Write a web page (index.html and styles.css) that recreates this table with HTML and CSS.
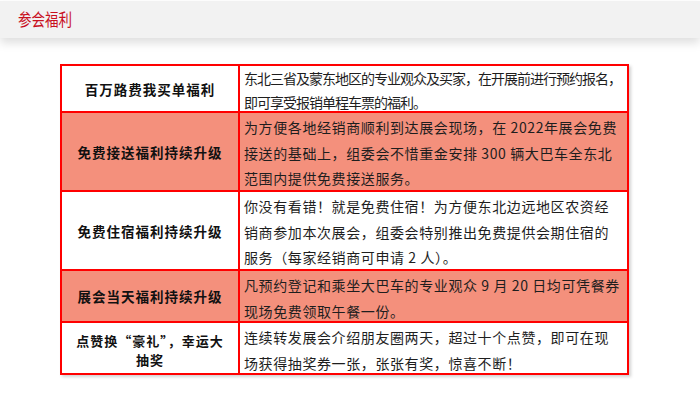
FILE: index.html
```html
<!DOCTYPE html>
<html lang="zh">
<head>
<meta charset="utf-8">
<title>参会福利</title>
<link rel="stylesheet" href="styles.css">
</head>
<body>
<header class="topbar">
  <h1 class="title"><span class="title-text">参会福利</span></h1>
</header>
<main class="content">
  <div class="benefits">
    <div class="name">百万路费我买单福利</div>
    <div class="desc tight">东北三省及蒙东地区的专业观众及买家，在开展前进行预约报名，<br>即可享受报销单程车票的福利。</div>

    <div class="name pink">免费接送福利持续升级</div>
    <div class="desc pink">为方便各地经销商顺利到达展会现场，在 2022年展会免费<br>接送的基础上，组委会不惜重金安排 300 辆大巴车全东北<br>范围内提供免费接送服务。</div>

    <div class="name">免费住宿福利持续升级</div>
    <div class="desc">你没有看错！就是免费住宿！为方便东北边远地区农资经<br>销商参加本次展会，组委会特别推出免费提供会期住宿的<br>服务（每家经销商可申请 2 人）。</div>

    <div class="name pink">展会当天福利持续升级</div>
    <div class="desc pink">凡预约登记和乘坐大巴车的专业观众 9 月 20 日均可凭餐券<br>现场免费领取午餐一份。</div>

    <div class="name two">点赞换“豪礼”，幸运大<br>抽奖</div>
    <div class="desc">连续转发展会介绍朋友圈两天，超过十个点赞，即可在现<br>场获得抽奖券一张，张张有奖，惊喜不断！</div>
  </div>
</main>
</body>
</html>
```

FILE: styles.css
```css
html, body {
  margin: 0;
  padding: 0;
  background: #ffffff;
}
body {
  font-family: "Noto Sans CJK SC", "Noto Sans", sans-serif;
  color: #1e1e1e;
  width: 700px;
  height: 393px;
  overflow: hidden;
}
.topbar {
  margin-top: 1px;
  height: 37px;
  background: #f2f2f2;
  box-shadow: 0 5px 9px rgba(0, 0, 0, 0.13);
  display: flex;
  align-items: center;
  padding-left: 18px;
}
.title {
  margin: 0;
  font-weight: normal;
  font-size: 13.5px;
  line-height: 1;
  color: #c8101e;
}
.title-text {
  display: inline-block;
  transform: scale(1, 1.25);
  transform-origin: left center;
}
.content {
  padding: 26px 0 0 60px;
}
.benefits {
  display: grid;
  grid-template-columns: 176px 387px;
  grid-template-rows: 45px 77px 77px 50px 50px;
  gap: 2px;
  padding: 2px;
  width: max-content;
  background: #ff0000;
  box-shadow: 2px 2px 3px rgba(0, 0, 0, 0.18);
}
.name, .desc {
  background: #ffffff;
  white-space: nowrap;
  overflow: visible;
}
.pink {
  background: #f4907c;
}
.name {
  font-size: 13.5px;
  font-weight: bold;
  letter-spacing: 1px;
  color: #111;
  display: flex;
  align-items: center;
  justify-content: center;
  text-align: center;
  line-height: 18px;
}
.name.two {
  font-size: 13px;
  line-height: 19px;
  padding-top: 4px;
}
.desc {
  font-size: 14px;
  letter-spacing: 0.6px;
  line-height: 25.5px;
  padding: 2px 0 0 4px;
}
.desc.tight {
  letter-spacing: -1px;
  line-height: 24px;
  padding-top: 0;
}
```
